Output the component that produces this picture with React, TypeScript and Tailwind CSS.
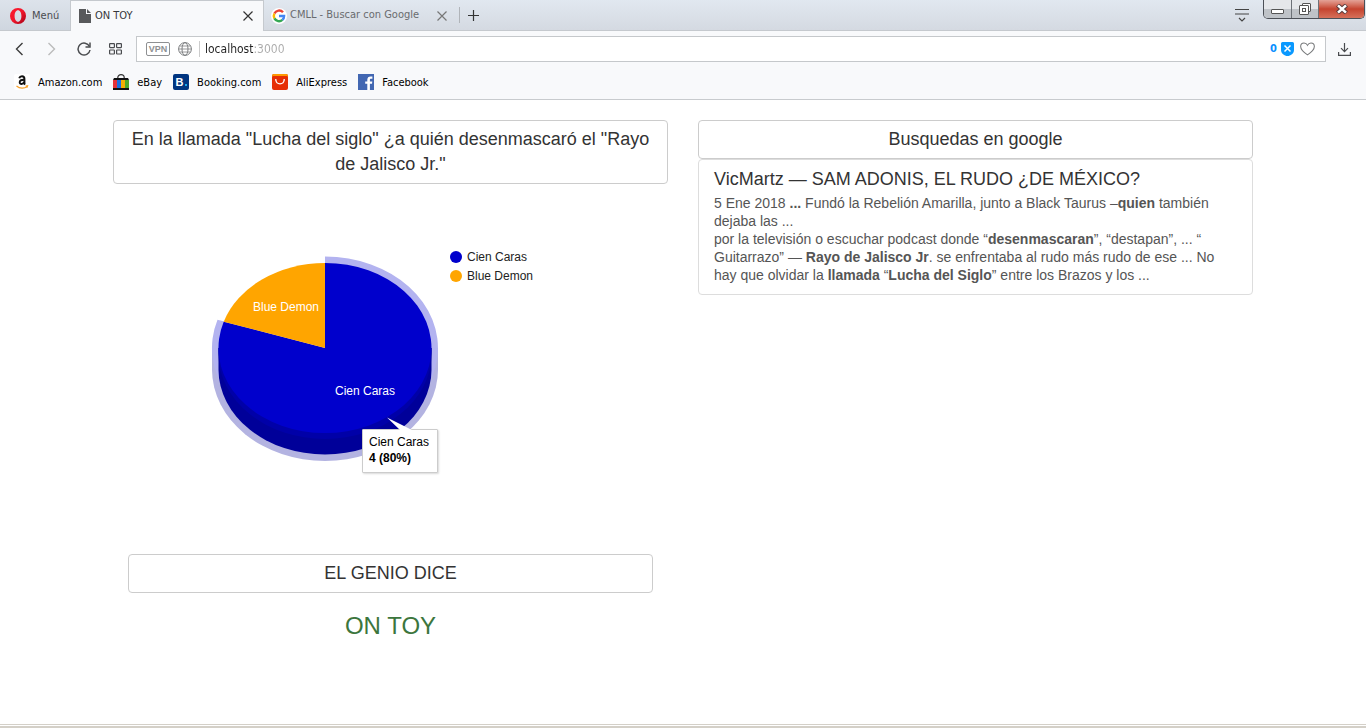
import React from "react";

const uiFont = "font-['Tahoma','DejaVu_Sans_Condensed','Noto_Sans',sans-serif]";

function OperaIcon() {
  return (
    <svg width="16" height="16" viewBox="0 0 16 16" aria-hidden="true">
      <defs>
        <linearGradient id="opera" x1="0" x2="1" y1="0" y2="1">
          <stop offset="0" stopColor="#ff1b2d" />
          <stop offset=".5" stopColor="#f0162b" />
          <stop offset="1" stopColor="#a20016" />
        </linearGradient>
      </defs>
      <path fill="url(#opera)" fillRule="evenodd" d="M8 0a8 8 0 1 0 0 16A8 8 0 0 0 8 0Zm0 2.200c2.100 0 3.400 2.600 3.400 5.800S10.100 13.800 8 13.800 4.600 11.200 4.600 8 5.900 2.200 8 2.200Z" />
    </svg>
  );
}

function PageIcon() {
  return (
    <svg width="12" height="14" viewBox="0 0 12 14" aria-hidden="true">
      <path fill="#58595b" d="M0 0h7v5h5v9H0ZM8 0l4 4H8Z" />
    </svg>
  );
}

function CloseIcon({ color }: { color: string }) {
  return (
    <svg width="10" height="10" viewBox="0 0 10 10" aria-hidden="true">
      <path d="M.5.5l9 9M9.500.5l-9 9" stroke={color} strokeWidth="1.200" fill="none" />
    </svg>
  );
}

function GoogleIcon() {
  return (
    <svg width="16" height="16" viewBox="0 0 16 16" aria-hidden="true">
      <circle cx="8" cy="8" r="8" fill="#fff" />
      <g fill="none" strokeWidth="2.400">
        <path d="M12 4.300A5.200 5.200 0 0 0 3.400 5.600" stroke="#ea4335" />
        <path d="M3.400 5.600A5.200 5.200 0 0 0 3.400 10.400" stroke="#fbbc05" />
        <path d="M3.400 10.400A5.200 5.200 0 0 0 11.400 11.900" stroke="#34a853" />
        <path d="M11.400 11.900A5.200 5.200 0 0 0 13.100 8H8" stroke="#4285f4" />
      </g>
    </svg>
  );
}

function Tabs() {
  return (
    <div className="flex h-[31px] bg-linear-to-b from-[#e1e8f0] to-[#d4d9e1]">
      <button className="flex w-[70px] items-center gap-1.5 border-b border-[#c5c9ce] bg-linear-to-b from-[#dde3eb] to-[#cfd6df] pt-px pl-2.5 text-[#4a4c50]">
        <OperaIcon />
        <span className="pt-px">Menú</span>
      </button>
      <div className="flex w-[194px] items-center border-x border-t border-[#c5c9ce] bg-[#f8f9fb] pr-2.5 pl-2 text-[#36383c]">
        <PageIcon />
        <span className="ml-1 flex-1">ON TOY</span>
        <button aria-label="Cerrar ON TOY">
          <CloseIcon color="#333" />
        </button>
      </div>
      <div className="flex w-[195px] items-center border-b border-[#c5c9ce] pt-px pr-3 pl-[7px] text-[#696b6e]">
        <GoogleIcon />
        <span className="ml-[3px] flex-1 whitespace-nowrap">CMLL - Buscar con Google</span>
        <button aria-label="Cerrar CMLL">
          <CloseIcon color="#777" />
        </button>
      </div>
      <div className="flex flex-1 items-center border-b border-[#c5c9ce]">
        <span className="h-4 w-px bg-[#b0b4b9]" />
        <button className="ml-2" aria-label="Nueva pestaña">
          <svg width="11" height="11" viewBox="0 0 11 11">
            <path d="M5.500 0v11M0 5.500h11" stroke="#333" strokeWidth="1.200" />
          </svg>
        </button>
        <span className="flex-1" />
        <button className="mr-[14px]" aria-label="Menú de pestañas">
          <svg width="14" height="13" viewBox="0 0 14 13" fill="none" stroke="#444" className="block">
            <path d="M0 .5h14M0 5h14M4 9l3 3 3-3" strokeWidth="1.200" />
          </svg>
        </button>
        <WindowButtons />
      </div>
    </div>
  );
}

function WindowButtons() {
  return (
    <div className="mr-px flex h-[19px] self-start overflow-hidden rounded-b-[5px] border border-t-0 border-[#4c5057]">
      <button aria-label="Minimizar" className="flex w-7 items-center justify-center border-r border-[#6d7278] bg-linear-to-b from-[#e5e7ea] from-50% to-[#bfc3c8] to-50%">
        <svg width="13" height="5" viewBox="0 0 13 5" className="mt-1">
          <rect x=".5" y=".5" width="12" height="4" rx=".5" fill="#fff" stroke="#555" />
        </svg>
      </button>
      <button aria-label="Restaurar" className="flex w-[27px] items-center justify-center border-r border-[#6d7278] bg-linear-to-b from-[#e5e7ea] from-50% to-[#bfc3c8] to-50%">
        <svg width="12" height="12" viewBox="0 0 12 12" fill="#fff" stroke="#555">
          <rect x="3.500" y=".5" width="8" height="8" rx=".5" />
          <rect x=".5" y="2.500" width="9" height="9" rx=".5" />
          <rect x="3.500" y="5.500" width="3" height="3" />
        </svg>
      </button>
      <button aria-label="Cerrar" className="flex w-[45px] items-center justify-center bg-linear-to-b from-[#e3a297] via-[#c5432f] via-50% to-[#d6705a]">
        <svg width="12" height="10" viewBox="0 0 12 10">
          <path d="M1.500 1l9 8M10.500 1l-9 8" stroke="#5b3a3a" strokeWidth="4.500" />
          <path d="M2 1.400l8 7.200M10 1.400L2 8.600" stroke="#fff" strokeWidth="2.600" />
        </svg>
      </button>
    </div>
  );
}

function AddressRow() {
  return (
    <div className="flex h-[31px] items-end pt-[5px]">
      <div className="flex h-[26px] w-[136px] shrink-0 items-center pl-[15px]">
        <button aria-label="Atrás">
          <svg width="9" height="14" viewBox="0 0 9 14" fill="none" stroke="#3c3c3c" strokeWidth="1.400" className="block">
            <path d="M7.500 1l-6 6 6 6" />
          </svg>
        </button>
        <button aria-label="Adelante" className="ml-[23px]">
          <svg width="9" height="14" viewBox="0 0 9 14" fill="none" stroke="#bbb" strokeWidth="1.400" className="block">
            <path d="M1.500 1l6 6-6 6" />
          </svg>
        </button>
        <button aria-label="Recargar" className="ml-[21px]">
          <svg width="14" height="14" viewBox="0 0 14 14" fill="none" stroke="#4a4c4f" strokeWidth="1.500" className="block">
            <path d="M12.500 4.500A6 6 0 1 0 13 8" />
            <path d="M13 .5v4.500H8.500" />
          </svg>
        </button>
        <button aria-label="Acceso rápido" className="ml-[18px]">
          <svg width="13" height="12" viewBox="0 0 13 12" fill="none" stroke="#4a4c4f" strokeWidth="1.200" className="block">
            <rect x=".6" y=".6" width="4.800" height="4" rx=".5" />
            <rect x="7.600" y=".6" width="4.800" height="4" rx=".5" />
            <rect x=".6" y="7" width="4.800" height="4" rx=".5" />
            <rect x="7.600" y="7" width="4.800" height="4" rx=".5" />
          </svg>
        </button>
      </div>
      <div className="flex h-[26px] flex-1 items-center border border-[#c5c8cb] bg-white pr-2.5 pl-[9px]">
        <span className="flex h-3.5 w-6 items-center justify-center rounded-[2px] border border-[#8e9092] font-['Liberation_Sans',sans-serif] text-[9px] leading-3 font-bold text-[#8e9092]">
          VPN
        </span>
        <svg width="14" height="14" viewBox="0 0 14 14" fill="none" stroke="#7d7f81" className="ml-2" aria-hidden="true">
          <circle cx="7" cy="7" r="6.400" />
          <ellipse cx="7" cy="7" rx="3" ry="6.400" />
          <path d="M.6 7h12.800M1.500 4h11M1.500 10h11" strokeWidth=".8" />
        </svg>
        <span className="mr-[5px] ml-[7px] h-4 w-px bg-[#ccc]" />
        <input
          aria-label="Dirección"
          defaultValue="localhost:3000"
          className="min-w-0 flex-1 bg-linear-to-r from-[#222] from-[48px] to-[#aaa] to-[48px] bg-clip-text font-['Tahoma','DejaVu_Sans_Condensed',sans-serif] text-[12px] text-transparent outline-none"
        />
        <span className="pt-px font-bold text-[#0a8fff]">0</span>
        <svg width="13" height="14" viewBox="0 0 13 14" className="ml-1" aria-hidden="true">
          <path fill="#0a99ff" d="M1.500 0h10A1.500 1.500 0 0 1 13 1.500V8c0 3.500-3.500 6-6.500 6S0 11.500 0 8V1.500A1.500 1.500 0 0 1 1.500 0Z" />
          <path d="M3.500 3.500l6 6M9.500 3.500l-6 6" stroke="#fff" strokeWidth="1.500" />
        </svg>
        <button aria-label="Favorito" className="ml-1.5">
          <svg width="15" height="14" viewBox="0 0 16 14" fill="none" stroke="#77797b" strokeWidth="1.100" className="block">
            <path d="M8 13.200C5 11.300.7 8 .7 4.400.7 2.200 2.300.7 4.300.7 6 .7 7.300 1.600 8 3.100 8.700 1.600 10 .7 11.700.7c2 0 3.600 1.500 3.600 3.700C15.300 8 11 11.300 8 13.200Z" />
          </svg>
        </button>
      </div>
      <div className="flex h-[26px] w-10 items-center pl-3">
        <button aria-label="Descargas">
          <svg width="13" height="13" viewBox="0 0 13 13" fill="none" stroke="#4a4c4f" strokeWidth="1.200" className="block">
            <path d="M6.500 0v8.500M3 5.200l3.500 3.500L10 5.200M.6 9v3.400h11.800V9" />
          </svg>
        </button>
      </div>
    </div>
  );
}

function AmazonIcon() {
  return (
    <svg width="16" height="16" viewBox="0 0 16 16" aria-hidden="true">
      <rect width="16" height="16" rx="2" fill="#fff" />
      <path d="M5.200 4.200C5.700 2.700 6.600 2.200 8 2.200c1.700 0 2.400.8 2.400 2.600v4.400c0 .7.200 1 .6 1.400" fill="none" stroke="#111" strokeWidth="2" />
      <path d="M10 5.700C7.200 5.700 5.700 6.300 5.700 8.200c0 2.400 3.300 2.300 4.300 0" fill="none" stroke="#111" strokeWidth="1.900" />
      <path d="M2.500 12c3.300 2.800 7.800 2.800 10.800.5M11.600 12l2-.2-.6 1.800" fill="none" stroke="#f8a22b" strokeWidth="1.200" />
    </svg>
  );
}

function EbayIcon() {
  return (
    <svg width="16" height="16" viewBox="0 0 16 16" aria-hidden="true">
      <path d="M4.800 5V3.500a3.200 2.900 0 0 1 6.400 0V5" fill="none" stroke="#333" strokeWidth="1.200" />
      <path d="M1 4h14l1 2v10H0V6Z" fill="#111" />
      <path d="M0 6h4v8H0Z" fill="#e53238" />
      <path d="M4 6h4v8H4Z" fill="#1b6fe0" />
      <path d="M8 6h4v8H8Z" fill="#f5af02" />
      <path d="M12 6h4v8h-4Z" fill="#4fa82a" />
    </svg>
  );
}

function BookingIcon() {
  return (
    <span className="flex size-4 items-center justify-center rounded-[2px] bg-[#003580] font-['Liberation_Sans',sans-serif] text-[11px] leading-4 font-bold text-white">
      B
      <svg width="2" height="2" viewBox="0 0 2 2" className="mt-1.5 ml-px" aria-hidden="true">
        <path fill="#19a5e8" d="M0 0h2v2H0Z" />
      </svg>
    </span>
  );
}

function AliIcon() {
  return (
    <svg width="16" height="16" viewBox="0 0 16 16" aria-hidden="true">
      <rect width="16" height="16" rx="2" fill="#e62e04" />
      <path d="M0 3V2a2 2 0 0 1 2-2h12a2 2 0 0 1 2 2v1a2 2 0 0 0-1-1H1a2 2 0 0 0-1 1Z" fill="#ff9a00" />
      <path d="M3.800 5.800c.6 5.400 7.800 5.400 8.400 0" fill="none" stroke="#fff" strokeWidth="1.200" />
      <circle cx="3.800" cy="5.700" r=".8" fill="#fff" />
      <circle cx="12.200" cy="5.700" r=".8" fill="#fff" />
    </svg>
  );
}

function FacebookIcon() {
  return (
    <svg width="16" height="16" viewBox="0 0 16 16" aria-hidden="true">
      <path fill="#4267b2" d="M0 0h16v16H0Z" />
      <path fill="#fff" d="M9.300 16V9.800H7.200V7.400h2.100V5.700c0-2.100 1.300-3.300 3.200-3.300l1.900.1v2.200h-1.300c-1 0-1.200.5-1.200 1.200v1.500h2.400l-.3 2.400h-2.100V16Z" />
    </svg>
  );
}

const bookmarks = [
  { name: "Amazon.com", icon: <AmazonIcon /> },
  { name: "eBay", icon: <EbayIcon /> },
  { name: "Booking.com", icon: <BookingIcon /> },
  { name: "AliExpress", icon: <AliIcon /> },
  { name: "Facebook", icon: <FacebookIcon /> },
];

function Bookmarks() {
  return (
    <nav className="flex h-[38px] items-center gap-[11px] border-b border-[#c8cbce] pt-[3px] pl-3.5 text-black">
      {bookmarks.map((b) => (
        <a key={b.name} href="#" className="flex items-center gap-2">
          {b.icon}
          <span className="pt-0.5">{b.name}</span>
        </a>
      ))}
    </nav>
  );
}

function PieChart() {
  return (
    <div className="relative">
      <svg viewBox="0 0 525 370" width="525" height="370" className="block font-['Liberation_Sans',Arial,sans-serif] text-[12px]" role="img" aria-label="Cien Caras 80%, Blue Demon 20%">
        <path fill="#b3b3e1" d="M84 164v21.500a113 91.500 0 0 0 226 0V164Z" />
        <path fill="#b3b3f0" d="M197 164V72.500A113 91.500 0 1 1 89.500 135.700Z" />
        <path fill="#000099" d="M90.500 164v21.500a106.500 85 0 0 0 213 0V164Z" />
        <path fill="#0000a8" d="M90.500 164v6a106.500 85 0 0 0 213 0v-6Z" />
        <path fill="#0000cc" d="M197 164V79A106.500 85 0 1 1 95.700 137.700Z" />
        <path fill="#ffa500" d="M197 164L95.700 137.700A106.500 85 0 0 1 197 79Z" />
        <g fill="#fff">
          <text x="125" y="127">Blue Demon</text>
          <text x="207" y="211">Cien Caras</text>
        </g>
        <circle cx="328" cy="73" r="6" fill="#0000cc" />
        <circle cx="328" cy="92" r="6" fill="#ffa500" />
        <g fill="#222">
          <text x="339" y="77">Cien Caras</text>
          <text x="339" y="96">Blue Demon</text>
        </g>
      </svg>
      <div className="absolute top-[245px] left-[234px] h-11 w-[76px] rounded-[1px] border border-[#ccc] bg-white px-1.5 pt-1 text-[12px] leading-4 whitespace-nowrap text-black shadow-[1px_1px_2px_rgba(0,0,0,0.15)]">
        Cien Caras
        <strong className="block">4 (80%)</strong>
        <svg width="26" height="14" viewBox="0 0 26 14" className="absolute -top-[13px] left-6" aria-hidden="true">
          <path d="M13 13L0 .5 25 13v1H13Z" fill="#fff" />
        </svg>
      </div>
    </div>
  );
}

const heading = "rounded border border-[#ccc] px-3 py-1.5 text-center text-[18px] leading-[25px] text-[#333]";

export default function App() {
  return (
    <div className="flex min-h-screen flex-col bg-white font-['Liberation_Sans',Arial,sans-serif]">
      <header className={`bg-[#f8f9fb] text-[11px] ${uiFont}`}>
        <Tabs />
        <AddressRow />
        <Bookmarks />
      </header>
      <main className="mx-auto grid w-full max-w-[1170px] flex-1 grid-cols-2 content-start gap-[30px] px-[15px] pt-5">
        <section>
          <h1 className={heading}>En la llamada "Lucha del siglo" ¿a quién desenmascaró el "Rayo de Jalisco Jr."</h1>
          <div className="px-[15px]">
            <PieChart />
            <h2 className={heading}>EL GENIO DICE</h2>
            <p className="mt-5 text-center text-[24px] leading-[26px] text-[#3c763d]">ON TOY</p>
          </div>
        </section>
        <section>
          <h2 className={heading}>Busquedas en google</h2>
          <article className="rounded border border-[#ddd] px-[15px] py-2.5">
            <h3 className="mb-[5px] text-[18px] leading-[19px] text-[#333]">VicMartz — SAM ADONIS, EL RUDO ¿DE MÉXICO?</h3>
            <p className="text-[14px] leading-[18px] text-[#555]">
              5 Ene 2018 <b>...</b> Fundó la Rebelión Amarilla, junto a Black Taurus –<b>quien</b> también dejaba las ...
              <br />
              por la televisión o escuchar podcast donde “<b>desenmascaran</b>”, “destapan”, ... “ Guitarrazo” —{" "}
              <b>Rayo de Jalisco Jr</b>. se enfrentaba al rudo más rudo de ese ... No hay que olvidar la <b>llamada</b> “
              <b>Lucha del Siglo</b>” entre los Brazos y los ...
            </p>
          </article>
        </section>
      </main>
      <footer className="h-1 border-t border-[#d4d0c8] bg-white pt-px">
        <div className="h-0.5 bg-[#d4d0c8]" />
      </footer>
    </div>
  );
}
